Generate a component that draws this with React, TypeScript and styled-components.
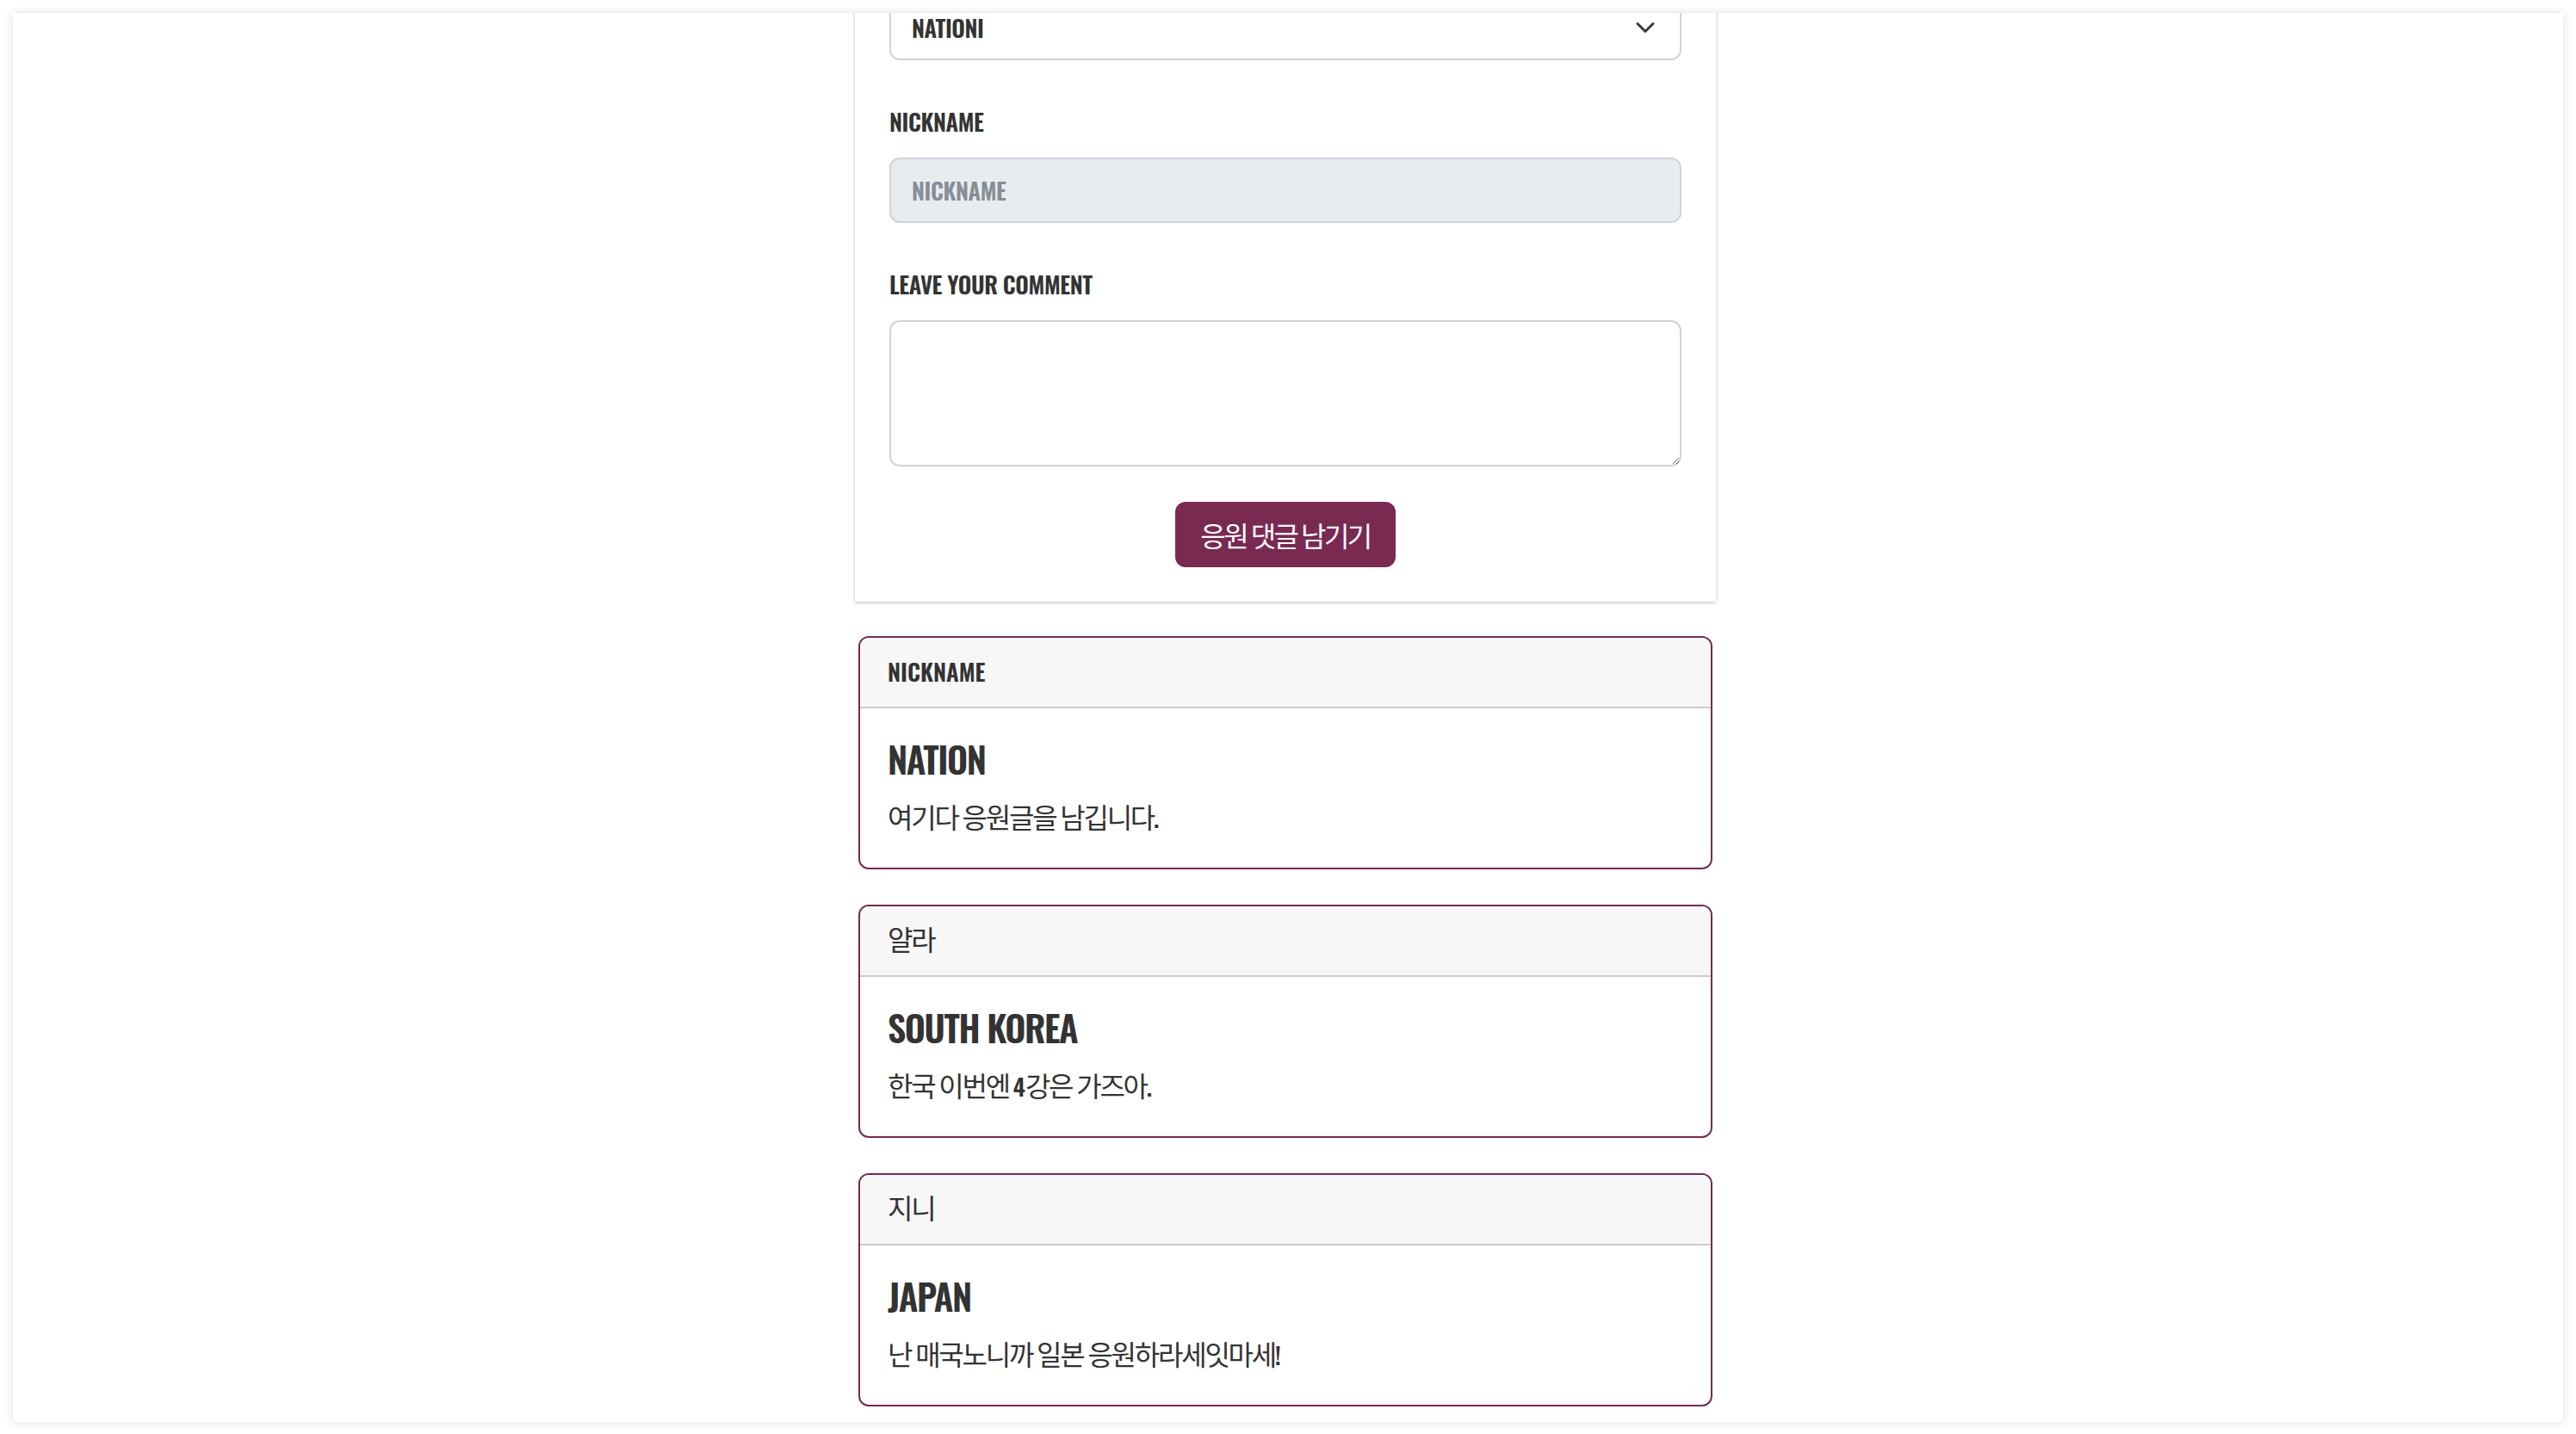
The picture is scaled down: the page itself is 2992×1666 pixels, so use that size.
import styled, { createGlobalStyle } from "styled-components";

const LATIN = `"Oswald", "Roboto", "Liberation Sans", sans-serif`;
const HANGUL = `"Noto Sans CJK KR", "Noto Sans", sans-serif`;

const GlobalStyle = createGlobalStyle`
  html, body {
    margin: 0;
    padding: 0;
    background: #ffffff;
  }
  body {
    font-family: ${HANGUL};
    color: #333333;
  }
  * {
    box-sizing: border-box;
  }
`;

const Frame = styled.div`
  margin: 15px;
  height: 1637px;
  padding-right: 6px;
  background: #ffffff;
  box-shadow: 0 0 10px rgba(0, 0, 0, 0.14);
  overflow: hidden;
`;

const Column = styled.div`
  width: 1000px;
  margin: -125px auto 0;
  display: flex;
  flex-direction: column;
  gap: 40px;
`;

const FormCard = styled.form`
  background: #ffffff;
  padding: 40px;
  box-shadow: 0 1px 4px rgba(0, 0, 0, 0.28);
  display: flex;
  flex-direction: column;
`;

const Field = styled.div`
  display: flex;
  flex-direction: column;
  margin-bottom: 49px;
  &:last-of-type {
    margin-bottom: 41px;
  }
`;

const Latin = styled.span`
  font-family: ${LATIN};
  font-weight: 600;
  font-size: 0.85em;
  line-height: 1;
  letter-spacing: 0;
`;

const Hangul = styled.span`
  font-family: ${HANGUL};
  font-weight: 400;
  line-height: 1;
  letter-spacing: -0.07em;
`;

const Label = styled.label`
  font-family: ${LATIN};
  font-weight: 600;
  font-size: 27px;
  line-height: 44px;
  letter-spacing: -0.4px;
  margin-bottom: 20px;
  color: #333333;
`;

const SelectBox = styled.div`
  height: 76px;
  display: flex;
  align-items: center;
  justify-content: space-between;
  padding: 0 28px 0 24px;
  border: 2px solid #ced4da;
  border-radius: 12px;
  background: #ffffff;
  font-family: ${LATIN};
  font-weight: 600;
  font-size: 27px;
  letter-spacing: -0.4px;
  color: #333333;
  svg {
    width: 24px;
    height: 24px;
  }
`;

const TextInput = styled.input`
  height: 76px;
  padding: 0 24px;
  border: 2px solid #ced4da;
  border-radius: 12px;
  background: #e9ecef;
  font-family: ${LATIN};
  font-weight: 600;
  font-size: 27px;
  letter-spacing: -0.4px;
  outline: none;
  &::placeholder {
    color: #868e96;
  }
`;

const TextArea = styled.textarea`
  height: 170px;
  padding: 12px 24px;
  border: 2px solid #ced4da;
  border-radius: 12px;
  background: #ffffff;
  font-family: ${HANGUL};
  font-size: 32px;
  outline: none;
  resize: vertical;
`;

const SubmitButton = styled.button`
  align-self: center;
  height: 76px;
  padding: 0 29px;
  border: none;
  border-radius: 12px;
  background: #7a2951;
  color: #ffffff;
  font-family: ${HANGUL};
  font-size: 32px;
  letter-spacing: -0.08em;
  cursor: pointer;
`;

const CommentList = styled.div`
  display: flex;
  flex-direction: column;
  gap: 41px;
  padding: 0 4px 40px;
`;

const CommentCard = styled.div`
  border: 2px solid #7a2951;
  border-radius: 12px;
  overflow: hidden;
  background: #ffffff;
`;

const CardHeader = styled.div`
  padding: 13px 32px 19px;
  background: #f7f7f7;
  border-bottom: 2px solid #cccccc;
  font-size: 32px;
  line-height: 48px;
  color: #333333;
`;

const CardBody = styled.div`
  padding: 30px 32px 36px;
`;

const Nation = styled.h4`
  margin: 0 0 14px;
  font-family: ${LATIN};
  font-weight: 600;
  font-size: 42px;
  line-height: 57px;
  letter-spacing: -1.4px;
  color: #333333;
`;

const CommentText = styled.p`
  margin: 0;
  font-size: 32px;
  line-height: 48px;
  color: #333333;
`;

type Comment = { nick: string; nation: string; text: string };

const comments: Comment[] = [
  { nick: "NICKNAME", nation: "NATION", text: "여기다 응원글을 남깁니다." },
  { nick: "얄라", nation: "SOUTH KOREA", text: "한국 이번엔 4강은 가즈아." },
  { nick: "지니", nation: "JAPAN", text: "난 매국노니까 일본 응원하라세잇마세!" },
];

// latin runs use the condensed display face, hangul falls back to the korean face
function Mixed({ text }: { text: string }) {
  const parts = text.split(/([A-Za-z0-9!.,?]+)/).filter(Boolean);
  return (
    <>
      {parts.map((p, i) =>
        /[A-Za-z0-9!.,?]/.test(p[0]) ? <Latin key={i}>{p}</Latin> : <Hangul key={i}>{p}</Hangul>
      )}
    </>
  );
}

function Chevron() {
  return (
    <svg viewBox="0 0 16 16" fill="none">
      <path d="M2 5l6 6 6-6" stroke="#343a40" strokeWidth="2" strokeLinecap="round" strokeLinejoin="round" />
    </svg>
  );
}

export default function App() {
  return (
    <>
      <GlobalStyle />
      <Frame>
        <Column>
          <FormCard onSubmit={(e) => e.preventDefault()}>
            <Field>
              <Label>NATION</Label>
              <SelectBox>
                <span>NATIONI</span>
                <Chevron />
              </SelectBox>
            </Field>
            <Field>
              <Label>NICKNAME</Label>
              <TextInput readOnly placeholder="NICKNAME" />
            </Field>
            <Field>
              <Label>LEAVE YOUR COMMENT</Label>
              <TextArea />
            </Field>
            <SubmitButton type="submit">응원 댓글 남기기</SubmitButton>
          </FormCard>
          <CommentList>
            {comments.map((c) => (
              <CommentCard key={c.nick}>
                <CardHeader>
                  <Mixed text={c.nick} />
                </CardHeader>
                <CardBody>
                  <Nation>{c.nation}</Nation>
                  <CommentText>
                    <Mixed text={c.text} />
                  </CommentText>
                </CardBody>
              </CommentCard>
            ))}
          </CommentList>
        </Column>
      </Frame>
    </>
  );
}
